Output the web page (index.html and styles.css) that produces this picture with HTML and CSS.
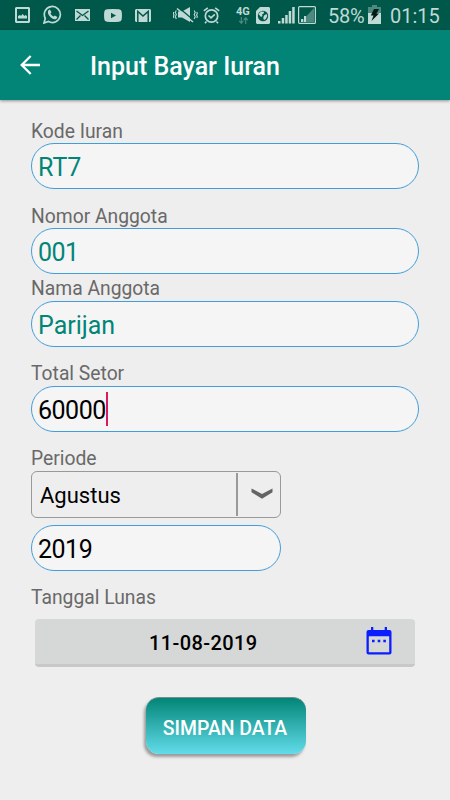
FILE: index.html
```html
<!DOCTYPE html>
<html lang="id">
<head>
<meta charset="utf-8">
<title>Input Bayar Iuran</title>
<link rel="stylesheet" href="styles.css">
</head>
<body>
<div class="status">
  <svg class="i-img" width="15" height="16" viewBox="0 0 15 16"><path fill-rule="evenodd" d="M1 0h13l1 1v14l-1 1H1l-1-1V1zM2 2v12h11V2z"/><path d="M3 11.5V9l2-1 1 1 1.500-2 2 2 1-1L12 9v2.500z"/></svg>
  <svg class="i-wa" width="19" height="19" viewBox="0 0 19 19"><path d="M1 18l1.300-4.700a8 8 0 1 1 3.200 3.200z" fill="none" stroke="#bfd9d4" stroke-width="1.700"/><path d="M5.500 5.200l1.400-.7 1.600 2.800-1 1.300c.7 1.400 1.700 2.300 3.100 3l1.200-1.200 2.500 1.500c-.2 1.600-1.300 2.300-2.600 2.300-3.300-.4-6.500-3.700-6.800-6.700 0-.9.200-1.600.6-2.300z"/></svg>
  <svg class="i-mail" width="15" height="12" viewBox="0 0 15 12"><path d="M0 0h15v12H0z"/><path d="M1.500 2l6 4.500 6-4.500M1.500 10.500l4-4M13.500 10.500l-4-4" fill="none" stroke="#00584b" stroke-width="1.300"/></svg>
  <svg class="i-yt" width="18" height="13" viewBox="0 0 18 13"><path fill-rule="evenodd" d="M3 .3Q9-.3 15 .3q2.500.2 2.700 2.500.5 3.700 0 7.400-.2 2.300-2.700 2.500-6 .6-12 0Q.5 12.500.3 10.200q-.5-3.700 0-7.400Q.5.500 3 .3zM7 3.700v5.600l5-2.800z"/></svg>
  <svg class="i-gm" width="16" height="13" viewBox="0 0 16 13"><path d="M1 0h14l1 1v11l-1 1H1l-1-1V1z"/><path d="M2.800 13V2.500L8 7l5.200-4.500V13" fill="none" stroke="#00584b" stroke-width="1.500"/></svg>
  <svg class="i-mute" width="25" height="16" viewBox="0 0 25 16"><path d="M5 4.500h4L17 0v15l-8-4.500H5z"/><path d="M5.500 .5l15 12.500" stroke="#00584b" stroke-width="1.300"/><path d="M4 1.500L20 15" stroke="#bfd9d4" stroke-width="1.500"/><path d="M3.300 3.500l-1 2 1 2-1 2 1 2.500M.8 5l-.5 1.500.7 1.500-.7 1.500.5 1.500M21.200 3.500l1 2-1 2 1 2-1 2.500M23.800 5l.5 1.500-.7 1.500.7 1.500-.5 1.500" fill="none" stroke="#bfd9d4" stroke-width="1.100"/></svg>
  <svg class="i-alarm" width="17" height="17" viewBox="0 0 17 17"><path d="M.8 3.800L4.800.8M16.200 3.800l-4-3M3.500 14.500L2 16.300M13.500 14.500l1.500 1.800M5.500 8.500l2.500 2.300 3.800-3.500" fill="none" stroke="#bfd9d4" stroke-width="1.600"/><circle cx="8.500" cy="9" r="6.200" fill="none" stroke="#bfd9d4" stroke-width="1.700"/></svg>
  <div class="net"><span>4G</span><svg width="9" height="7" viewBox="0 0 9 7"><path d="M2.300 0v6M.3 3.800l2 2.500 2-2.500M6.700 7V1M4.700 3.200l2-2.500 2 2.500" fill="none" stroke="#4c8a81" stroke-width="1.200"/></svg></div>
  <svg class="i-sim" width="14" height="17" viewBox="0 0 14 17"><path d="M4 0h9l1 1v15l-1 1H1l-1-1V4z"/><circle cx="7" cy="9" r="5.200" fill="#00584b"/><path d="M2.500 7l2.500-2.500 3 .3-.3 1.700-1.700 1 .5 1.500-1.500 1zM8 8.500l2.500-1.500.8 2-1.500 3-1.800 1-.8-2z"/></svg>
  <svg class="i-sig" width="17" height="17" viewBox="0 0 17 17"><path d="M0 14h2.500v2.500H0zM3.700 11h2.500v5.500H3.700zM7.200 8h2.500v8.500H7.200zM10.700 4h2.500v12.500h-2.500zM14.200 0h2.500v16.500h-2.500z"/></svg>
  <svg class="i-sig2" width="18" height="18" viewBox="0 0 18 18"><path d="M3 16L16 2v14z" fill="#4c8a81"/><path d="M3 13h2v3H3zM6 10h2v6H6z"/><rect x=".6" y=".6" width="16.800" height="16.800" rx="1" fill="none" stroke="#bfd9d4" stroke-width="1.200"/></svg>
  <span class="pct">58%</span>
  <svg class="i-bat" width="13" height="19" viewBox="0 0 13 19"><path d="M4 0h5v2h4v6H0V2h4z" fill="#4c8a81"/><path d="M0 8h13v11H0z"/><path d="M6 4h5L8.500 8.500H11L3.500 16l2-5.500H2.800z" fill="#001b17"/></svg>
  <span class="clock">01:15</span>
</div>
<header class="bar">
  <svg width="20" height="20" viewBox="0 0 20 20"><path d="M20 10H2M10.700 1L1.700 10l9 9" fill="none" stroke="#fff" stroke-width="2.300"/></svg>
  <h1>Input Bayar Iuran</h1>
</header>
<main>
  <label class="label low">Kode Iuran</label>
  <div class="field teal">RT7</div>
  <label class="label low gap">Nomor Anggota</label>
  <div class="field teal number">001</div>
  <label class="label tight">Nama Anggota</label>
  <div class="field teal">Parijan</div>
  <label class="label gap">Total Setor</label>
  <div class="field number">60000<i class="caret"></i></div>
  <label class="label gap">Periode</label>
  <div class="select"><span>Agustus</span><div class="arrow"><svg width="22" height="12" viewBox="0 0 22 12"><path d="M.5 .5l10.500 5.500L21.500 .5v3.800L11 10.800.5 4.300z" fill="#646464"/></svg></div></div>
  <div class="field short number">2019</div>
  <label class="label gap">Tanggal Lunas</label>
  <div class="date"><span>11-08-2019</span><svg width="26" height="28" viewBox="0 0 26 28"><path fill-rule="evenodd" d="M5 0h2.300v3h11.400V0H21v3h2.500Q25.500 3 25.500 5v20.500q0 2-2 2h-21q-2 0-2-2V5q0-2 2-2H5zM2.800 9.200v16h20.400v-16z" fill="#0a1eff"/><path d="M6 12.700h2.600v2.600H6zM11.700 12.700h2.600v2.600h-2.600zM17.300 12.700h2.600v2.600h-2.600z" fill="#0a1eff"/></svg></div>
  <div class="save">SIMPAN DATA</div>
</main>
</body>
</html>
```
FILE: styles.css
```css
* { box-sizing: border-box; }
body {
  margin: 0;
  width: 450px;
  height: 800px;
  overflow: hidden;
  background: #eee;
  font-family: Roboto, "Liberation Sans", sans-serif;
  color: #000;
}
svg { display: block; flex: none; fill: #bfd9d4; }
.status {
  display: flex;
  align-items: flex-start;
  height: 30px;
  background: #00584b;
  color: #bfd9d4;
}
.i-img { margin: 7px 0 0 15px; }
.i-wa { margin: 5px 0 0 13px; }
.i-mail { margin: 9px 0 0 13px; }
.i-yt { margin: 9px 0 0 14px; }
.i-gm { margin: 9px 0 0 13px; }
.i-mute { margin: 7px 0 0 22px; }
.i-alarm { margin: 7px 0 0 5px; }
.net { width: 15px; margin: 7px 0 0 16px; }
.net span { display: block; font-size: 11px; line-height: 10px; font-weight: 700; }
.net svg { margin: 0 0 0 3px; }
.i-sim { margin: 7px 0 0 5px; }
.i-sig { margin: 7px 0 0 8px; }
.i-sig2 { margin: 6px 0 0 3px; }
.pct { width: 40px; margin-left: 12px; font-size: 20px; line-height: 33px; letter-spacing: -0.2px; }
.i-bat { margin: 5px 0 0 0; }
.clock { margin-left: 9px; font-size: 20px; line-height: 33px; }
.bar {
  display: flex;
  align-items: center;
  height: 70px;
  padding: 0 0 0 20px;
  background: #028577;
  box-shadow: 0 1px 3px rgba(0, 0, 0, 0.4);
}
.bar h1 {
  margin: 3px 0 0 50px;
  color: #fff;
  font-size: 25px;
  font-weight: 500;
  line-height: 30px;
}
main { padding: 20px 31px 0; }
.label {
  display: block;
  height: 23px;
  font-size: 19.3px;
  line-height: 22px;
  color: #696969;
}
.low { line-height: 24px; }
.gap { margin-top: 16px; }
.tight { margin-top: 4px; }
.field {
  display: flex;
  align-items: center;
  width: 388px;
  height: 46px;
  padding: 3px 0 0 6px;
  border: 1px solid #429ed9;
  border-radius: 23px;
  background: #f5f5f5;
  font-size: 25px;
  line-height: 30px;
}
.number { letter-spacing: -0.5px; }
.teal { color: #028577; }
.caret { width: 2px; height: 34px; margin-top: -4px; background: #d81b60; }
.short { width: 250px; margin-top: 7px; }
.select {
  display: flex;
  align-items: center;
  width: 250px;
  height: 47px;
  border: 1px solid #999;
  border-radius: 6px;
  padding-left: 8px;
  font-size: 22px;
}
.select span { flex: 1; padding-top: 1px; }
.arrow {
  width: 44px;
  height: 43px;
  padding: 15px 0 0 13px;
  border-left: 2px solid #999;
}
.date {
  display: flex;
  align-items: center;
  height: 48px;
  width: 380px;
  margin: 9px 0 0 4px;
  padding: 0 23px 2px 114px;
  border-radius: 4px;
  border-bottom: 3px solid #c7c8c8;
  background: #d6d8d7;
  font-size: 20px;
  font-weight: 500;
  letter-spacing: 0.4px;
}
.date span { padding-top: 4px; }
.date svg { margin: 1px 0 0 auto; }
.save {
  width: 160px;
  height: 57px;
  margin: 30px 0 0 115px;
  padding-right: 2px;
  border-radius: 13px;
  border-top: 1px solid #748f8b;
  background: linear-gradient(#028577, #62dcea);
  box-shadow: -2px 3px 3px rgba(0, 0, 0, 0.35);
  color: #fff;
  font-size: 19.4px;
  font-weight: 500;
  line-height: 61px;
  text-align: center;
}
```
